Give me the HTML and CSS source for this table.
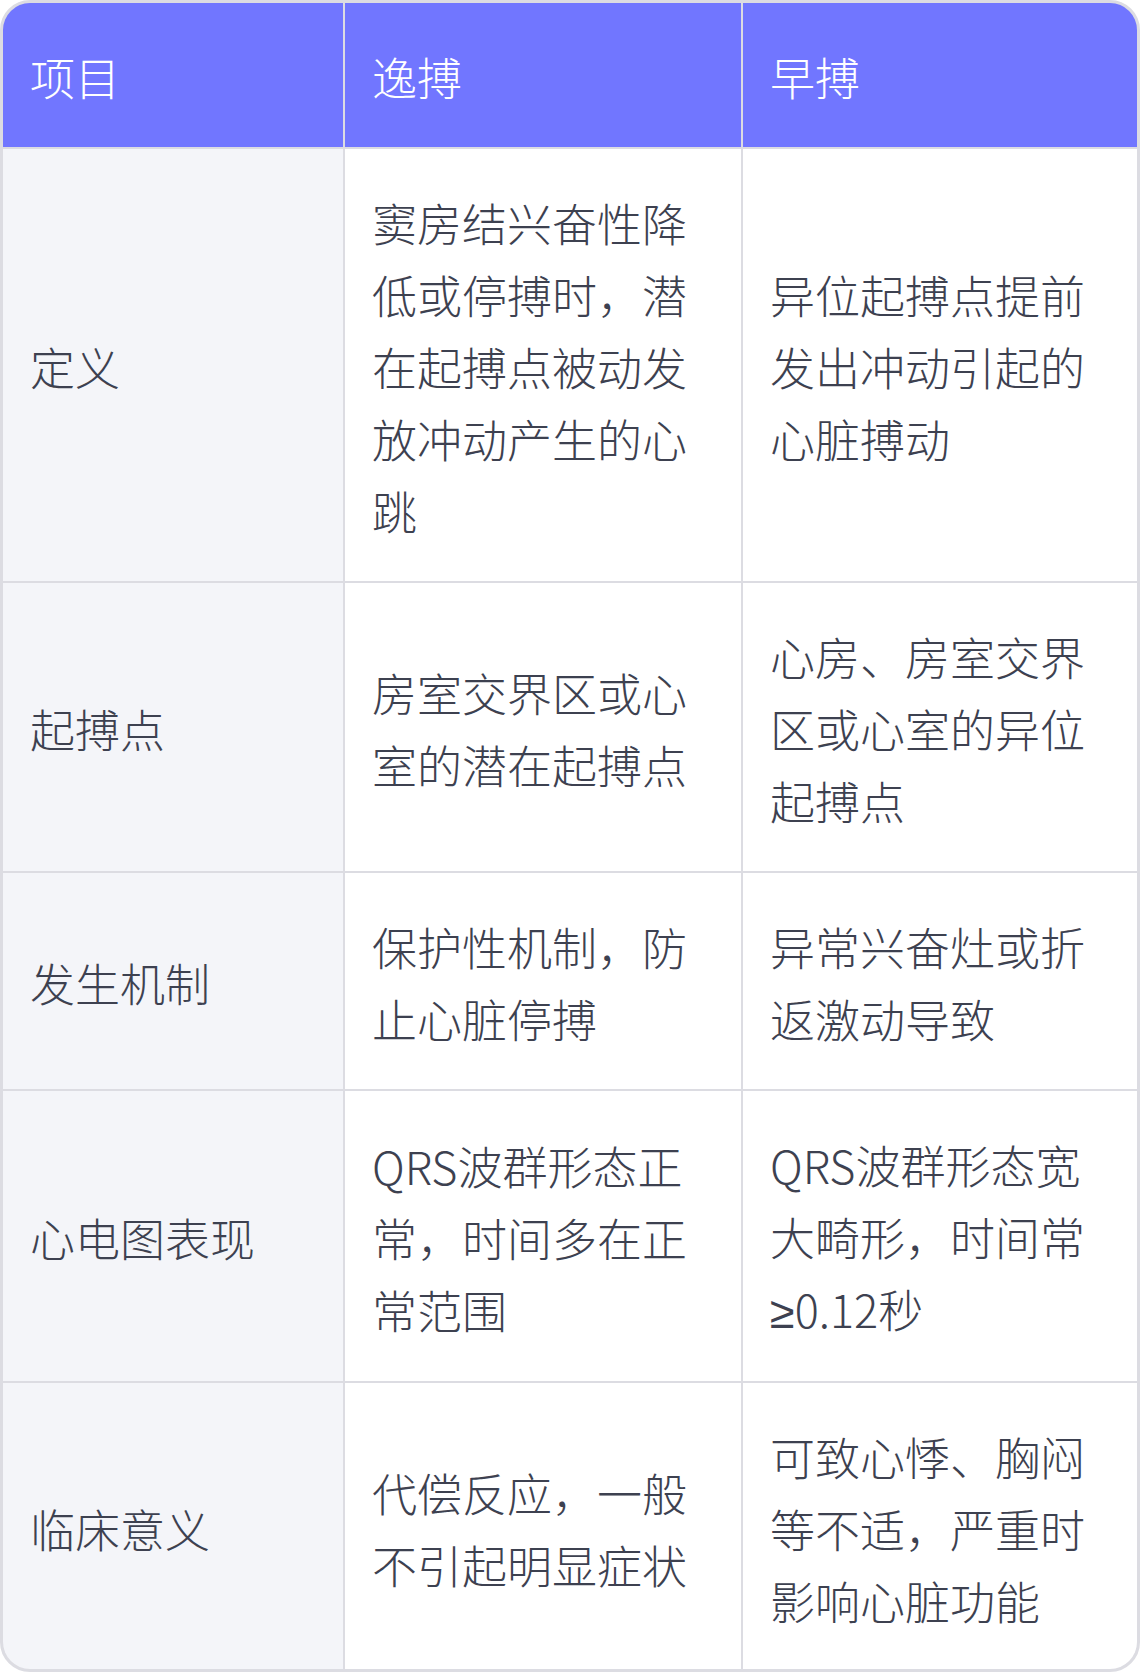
FILE: index.html
```html
<!DOCTYPE html>
<html lang="zh-CN">
<head>
<meta charset="utf-8">
<link rel="stylesheet" href="styles.css">
</head>
<body>
<div class="table">
  <div class="cell head">项目</div>
  <div class="cell head">逸搏</div>
  <div class="cell head">早搏</div>

  <div class="cell label">定义</div>
  <div class="cell">窦房结兴奋性降低或停搏时，潜在起搏点被动发放冲动产生的心跳</div>
  <div class="cell">异位起搏点提前发出冲动引起的心脏搏动</div>

  <div class="cell label">起搏点</div>
  <div class="cell">房室交界区或心室的潜在起搏点</div>
  <div class="cell">心房、房室交界区或心室的异位起搏点</div>

  <div class="cell label">发生机制</div>
  <div class="cell">保护性机制，防止心脏停搏</div>
  <div class="cell">异常兴奋灶或折返激动导致</div>

  <div class="cell label">心电图表现</div>
  <div class="cell">QRS波群形态正常，时间多在正常范围</div>
  <div class="cell"><span>QRS波群形态宽大畸形，时间常<span class="nw"><span class="ge">≥</span>0.12</span>秒</span></div>

  <div class="cell label">临床意义</div>
  <div class="cell">代偿反应，一般不引起明显症状</div>
  <div class="cell">可致心悸、胸闷等不适，严重时影响心脏功能</div>
</div>
</body>
</html>
```

FILE: styles.css
```css
html, body {
  margin: 0;
  padding: 0;
  background: #ffffff;
}

.table {
  width: 1140px;
  height: 1672px;
  box-sizing: border-box;
  display: grid;
  grid-template-columns: 340px 396px 394px;
  grid-auto-rows: auto;
  gap: 2px;
  background: #dcdce2;
  border: 3px solid #dcdce2;
  border-radius: 30px;
  overflow: hidden;
  font-family: "Noto Sans CJK SC", "Noto Sans", sans-serif;
  font-weight: 200;
  font-size: 45px;
  line-height: 72px;
  color: #3d4150;
}

.cell {
  display: flex;
  align-items: center;
  padding: 38px 27px 34px;
  background: #ffffff;
  word-break: break-all;
}

.head {
  background: #7176ff;
  color: #ffffff;
}

.label {
  background: #f4f5f9;
}

.nw {
  white-space: nowrap;
}

.ge {
  font-family: "Noto Sans", "DejaVu Sans", sans-serif;
  font-weight: 200;
}
```
